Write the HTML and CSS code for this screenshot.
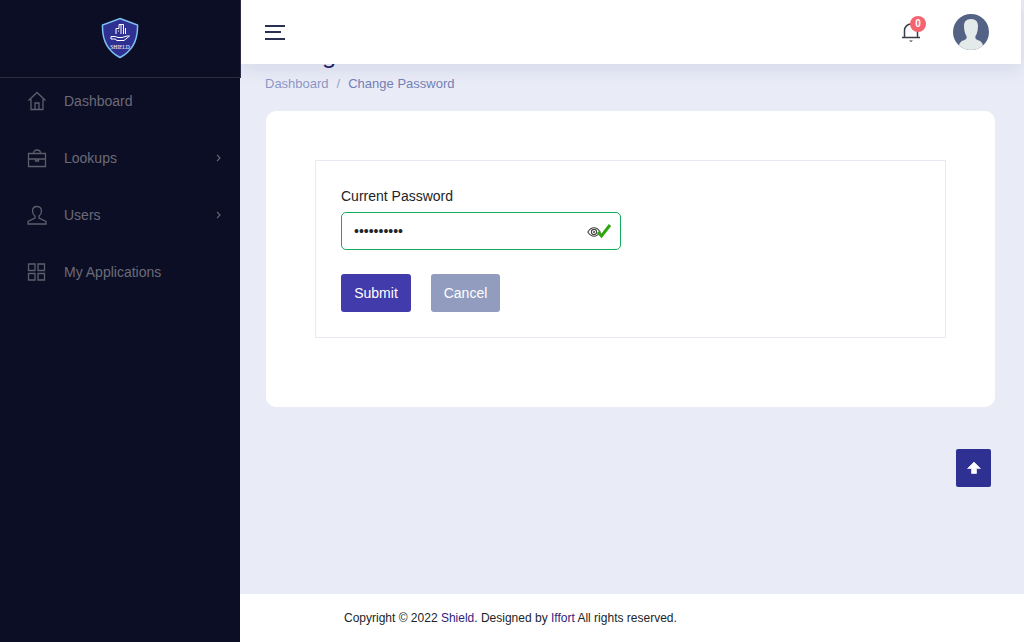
FILE: index.html
```html
<!DOCTYPE html>
<html lang="en">
<head>
<meta charset="utf-8">
<title>Change Password</title>
<link rel="stylesheet" href="styles.css">
</head>
<body>
<div class="app">
  <aside class="sidebar">
    <div class="brand">
      <svg class="logo" width="38" height="42" viewBox="0 0 38 42">
        <path d="M19 1.500 L36.500 8 C37 22 33 33 19 40.500 C5 33 1 22 1.500 8 Z" fill="#2e3192" stroke="#7cc0f2" stroke-width="1.500"/>
        <path d="M15 17V11.500h3V7.500h4.500V17M20 7.500V17M17 14h1M24.500 17V11" fill="none" stroke="#fff" stroke-width="1"/>
        <path d="M10 19.500h4l3 1h4l5-1.500h2.500l-5.500 4.500h-7l-2-1.500H10z" fill="none" stroke="#fff" stroke-width="1"/>
        <text x="19" y="31.500" class="logo-text">SHIELD</text>
      </svg>
    </div>
    <nav class="menu">
      <a class="menu-item">
        <svg class="menu-icon" viewBox="0 0 20 20"><path d="M1.500 9.500 10 1.500l8.500 8M4 8v10.500h12V8M8 18.500V12h4v6.500"/></svg>
        <span class="menu-label">Dashboard</span>
      </a>
      <a class="menu-item">
        <svg class="menu-icon" viewBox="0 0 20 20"><path d="M1.500 5.500h17v13h-17zM1.500 11h17M6.500 5.500C6.500 3.500 8 2 10 2s3.500 1.500 3.500 3.500M8.500 11v2h3v-2"/></svg>
        <span class="menu-label">Lookups</span>
        <svg class="chevron" viewBox="0 0 5 8"><path d="M1 .8 4 4 1 7.200"/></svg>
      </a>
      <a class="menu-item">
        <svg class="menu-icon" viewBox="0 0 20 20"><path d="M10 1.500c-3 0-4.500 2-4.500 4.500 0 2 1 4 2.500 5v2L1 16.500v2.500h18v-2.500L12 13v-2c1.500-1 2.500-3 2.500-5 0-2.500-1.500-4.500-4.500-4.500z"/></svg>
        <span class="menu-label">Users</span>
        <svg class="chevron" viewBox="0 0 5 8"><path d="M1 .8 4 4 1 7.200"/></svg>
      </a>
      <a class="menu-item">
        <svg class="menu-icon" viewBox="0 0 20 20"><path d="M1.500 2H8v6.500H1.500zM11 2h6.500v6.500H11zM1.500 11.500H8V18H1.500zM11 11.500h6.500V18H11z"/></svg>
        <span class="menu-label">My Applications</span>
      </a>
    </nav>
  </aside>
  <div class="main">
    <header class="topbar">
      <button class="burger" aria-label="Menu"><span></span><span class="short"></span><span></span></button>
      <div class="topbar-right">
        <div class="bell">
          <svg width="20" height="22" viewBox="0 0 20 22"><path d="M1 16.500h18M3.500 16.500V9.500a6.500 6.500 0 0 1 13 0v7" fill="none" stroke="#3a3f4e" stroke-width="1.500"/><path d="M8 19.500h4l-2 1.500z" fill="#3a3f4e"/></svg>
          <span class="badge">0</span>
        </div>
        <svg class="avatar" width="36" height="36" viewBox="0 0 36 36">
          <defs><clipPath id="round"><circle cx="18" cy="18" r="18"/></clipPath></defs>
          <g clip-path="url(#round)">
            <rect width="36" height="36" fill="#546285"/>
            <path d="M18 5c-5 0-7 3-7 7 0 4 1 8 2.500 10 .5 2 0 3-2 4-3 1-6 2-6 10h25c0-8-3-9-6-10-2-1-2.500-2-2-4 1.500-2 2.500-6 2.500-10 0-4-2-7-7-7z" fill="#e4eaea"/>
          </g>
        </svg>
      </div>
    </header>
    <main class="content">
      <h1 class="page-title">Change Password</h1>
      <ol class="crumbs">
        <li>Dashboard</li>
        <li class="sep">/</li>
        <li class="current">Change Password</li>
      </ol>
      <section class="card">
        <form class="form-box">
          <label class="field-label" for="pw">Current Password</label>
          <div class="field">
            <input id="pw" class="input" type="password" value="1234567890">
            <svg class="eye" width="14" height="12" viewBox="0 0 14 12"><path d="M.8 6C3 2.500 5 1.800 7 1.800S11 2.500 13.200 6C11 9.500 9 10.200 7 10.200S3 9.500 .8 6z" fill="none" stroke="#444" stroke-width="1.100"/><circle cx="7" cy="6" r="2.600" fill="none" stroke="#444" stroke-width="1.100"/><circle cx="7" cy="6" r="1" fill="#444"/></svg>
            <svg class="check" width="16" height="16" viewBox="0 0 16 16"><path d="M2 9l3.500 4L14 2" fill="none" stroke="#2fa50f" stroke-width="3"/></svg>
          </div>
          <div class="actions">
            <button type="button" class="btn btn-primary">Submit</button>
            <button type="button" class="btn btn-muted">Cancel</button>
          </div>
        </form>
      </section>
    </main>
    <footer class="footer">Copyright © 2022 <span class="link">Shield</span>. Designed by <span class="link">Iffort</span> All rights reserved.</footer>
  </div>
</div>
<button class="to-top" aria-label="Back to top">
  <svg width="14" height="14" viewBox="0 0 14 14"><path d="M7 1 13.500 7.500 H9.500 V12.500 H4.500 V7.500 H.5 Z" fill="#fff" stroke="#fff" stroke-width=".6" stroke-linejoin="round"/></svg>
</button>
</body>
</html>
```
FILE: styles.css
```css
* { box-sizing: border-box; }
html, body { margin: 0; height: 100%; overflow: hidden; }
body { font-family: "Liberation Sans", Arial, sans-serif; background: #e9ebf7; color: #212529; }
.app { display: flex; height: 642px; }

.sidebar { width: 240px; flex: none; background: #0c0e25; }
.brand { width: 241px; height: 78px; display: flex; justify-content: center; padding: 17px 1px 0 0; background: #0c0e25; border-bottom: 1px solid #2a2b3e; border-right: 1px solid #2c2c44; position: relative; z-index: 3; }
.logo { display: block; }
.logo-text { font-family: "Liberation Serif", serif; font-size: 5.500px; fill: #fff; text-anchor: middle; }
.menu { display: flex; flex-direction: column; margin-top: -6px; position: relative; z-index: 4; }
.menu-item { height: 57px; display: flex; align-items: center; padding: 0 19px 0 27px; color: #6b6b78; font-size: 14px; }
.menu-icon { width: 20px; height: 20px; flex: none; fill: none; stroke: #5d5e6b; stroke-width: 1.300; margin-right: 17px; }
.menu-label { flex: 1; }
.chevron { width: 5px; height: 8px; fill: none; stroke: #6b6b78; stroke-width: 1.100; margin-right: 0; }

.main { flex: 1; min-width: 0; display: flex; flex-direction: column; }
.topbar { height: 64px; flex: none; margin: 0 3px 0 1px; background: #fff; display: flex; align-items: center; justify-content: space-between; padding: 0 32px 0 24px; box-shadow: 0 4px 18px rgba(30, 40, 90, .1); position: relative; z-index: 2; }
.burger { width: 20px; height: 15px; padding: 0; border: 0; background: none; display: flex; flex-direction: column; justify-content: space-between; }
.burger span { display: block; height: 2px; width: 20px; background: #2a3052; }
.burger .short { width: 16px; }
.topbar-right { display: flex; align-items: center; gap: 33px; }
.bell { position: relative; width: 20px; height: 22px; margin-left: 1px; }
.bell svg { display: block; }
.badge { position: absolute; top: -5px; left: 9px; width: 16px; height: 16px; border-radius: 50%; background: #f4656f; color: #fff; font-size: 10px; font-weight: 700; line-height: 16px; text-align: center; }
.avatar { display: block; margin-left: -1px; }

.content { flex: 1; padding: 0 29px 0 26px; min-height: 0; }
.page-title { margin: -23px 0 0 -1px; font-size: 23px; line-height: 29px; font-weight: 400; color: #1f1a66; font-family: "Inter", sans-serif; height: 29px; }
.crumbs { list-style: none; margin: 5px 0 0 -1px; padding: 0; display: flex; gap: 8px; font-size: 13px; line-height: 17px; color: #8d97c4; }
.crumbs .current { color: #7480b5; }
.sep { color: #9aa3cb; }
.card { margin-top: 19px; height: 296px; background: #fff; border-radius: 10px; padding: 49px; width: 729px; }
.form-box { border: 1px solid #e9e9f5; height: 178px; padding: 26px 25px 0; width: 631px; }
.field-label { display: block; font-size: 14px; line-height: 19px; color: #212529; margin-bottom: 6px; }
.field { position: relative; width: 280px; height: 38px; }
.input { display: block; width: 100%; height: 100%; border: 1px solid #12ad5a; border-radius: 5px; padding: 0 12px; font-size: 14px; color: #212529; font-family: "Liberation Sans", sans-serif; background: #fff; outline: 0; }
.eye { position: absolute; left: 246px; top: 14px; }
.check { position: absolute; left: 255px; top: 11px; }
.actions { display: flex; gap: 20px; margin-top: 24px; }
.btn { height: 38px; border: 0; border-radius: 3px; color: #fff; font-size: 14px; font-family: "Liberation Sans", sans-serif; padding: 0; }
.btn-primary { width: 70px; background: #413bab; }
.btn-muted { width: 69px; background: #919cbf; }

.footer { height: 48px; flex: none; background: #fff; padding-left: 104px; font-size: 12px; line-height: 48px; color: #212529; }
.link { color: #30237f; }

.to-top { position: fixed; left: 956px; top: 449px; width: 35px; height: 38px; border: 0; border-radius: 2px; background: #2e3192; padding: 0; display: flex; align-items: center; justify-content: center; }
```
